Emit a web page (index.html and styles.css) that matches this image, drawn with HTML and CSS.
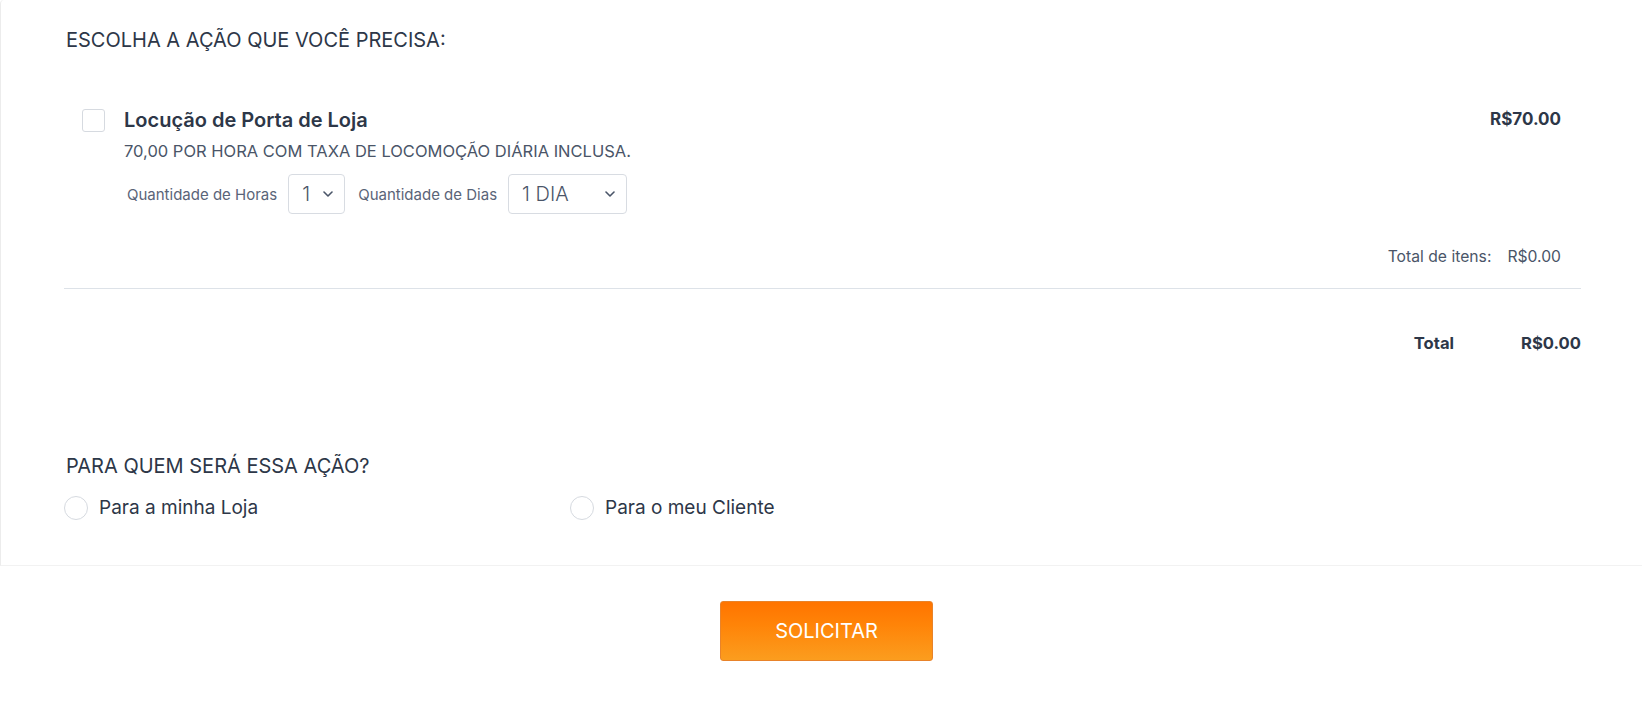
FILE: index.html
```html
<!DOCTYPE html>
<html lang="pt-BR">
<head>
<meta charset="utf-8">
<title>Escolha a ação</title>
<link rel="stylesheet" href="styles.css">
</head>
<body>
<div class="card">
  <div class="main">
    <h2 class="section-title">ESCOLHA A AÇÃO QUE VOCÊ PRECISA:</h2>

    <div class="item">
      <span class="checkbox"></span>
      <div class="item-body">
        <div class="item-title">Locução de Porta de Loja</div>
        <div class="item-desc">70,00 POR HORA COM TAXA DE LOCOMOÇÃO DIÁRIA INCLUSA.</div>
        <div class="options">
          <span class="opt-label">Quantidade de Horas</span>
          <span class="select select-sm"><span class="select-val">1</span><svg class="chev" viewBox="0 0 10 6" width="10" height="6"><path d="M1 1l4 4 4-4" fill="none" stroke="#4a5568" stroke-width="1.6" stroke-linecap="round" stroke-linejoin="round"/></svg></span>
          <span class="opt-label">Quantidade de Dias</span>
          <span class="select select-lg"><span class="select-val">1 DIA</span><svg class="chev" viewBox="0 0 10 6" width="10" height="6"><path d="M1 1l4 4 4-4" fill="none" stroke="#4a5568" stroke-width="1.6" stroke-linecap="round" stroke-linejoin="round"/></svg></span>
        </div>
      </div>
      <div class="item-price">R$70.00</div>
    </div>

    <div class="subtotal">
      <span class="subtotal-label">Total de itens:</span>
      <span class="subtotal-val">R$0.00</span>
    </div>

    <div class="rule"></div>

    <div class="total">
      <span class="total-label">Total</span>
      <span class="total-val">R$0.00</span>
    </div>

    <h2 class="section-title second">PARA QUEM SERÁ ESSA AÇÃO?</h2>
    <div class="radios">
      <label class="radio-opt"><span class="radio"></span><span class="radio-text">Para a minha Loja</span></label>
      <label class="radio-opt"><span class="radio"></span><span class="radio-text">Para o meu Cliente</span></label>
    </div>
  </div>
</div>
<div class="footer">
  <button class="btn" type="button">SOLICITAR</button>
</div>
</body>
</html>
```

FILE: styles.css
```css
html, body {
  margin: 0;
  padding: 0;
  background: #ffffff;
}
body {
  font-family: Inter, "Noto Sans", sans-serif;
  color: #2d3748;
}
.card {
  border-left: 1px solid #ececec;
  border-bottom: 1px solid #f2f2f2;
  border-top-left-radius: 4px;
  height: 566px;
  box-sizing: border-box;
}
.main {
  padding: 26px 61px 0 63px;
}
.section-title {
  margin: 0 0 0 2px;
  font-size: 20px;
  font-weight: 400;
  line-height: 28px;
  color: #2d3748;
  letter-spacing: 0;
}
.section-title.second {
  margin-top: 98px;
}
.item {
  display: flex;
  align-items: flex-start;
  padding: 0 20px 0 18px;
  margin-top: 54px;
}
.checkbox {
  width: 21px;
  height: 21px;
  border: 1px solid #d6dae0;
  border-radius: 3px;
  flex: none;
  margin-top: 1px;
  background: #fff;
}
.item-body {
  flex: 1;
  margin-left: 19px;
}
.item-title {
  font-size: 20px;
  font-weight: 600;
  line-height: 24px;
  color: #2d3748;
}
.item-desc {
  margin-top: 9px;
  font-size: 16.5px;
  line-height: 20px;
  color: #4a5568;
}
.options {
  display: flex;
  align-items: center;
  margin-top: 13px;
  margin-left: 3px;
}
.opt-label {
  font-size: 15px;
  color: #5a6478;
  margin-right: 11px;
}
.select {
  display: flex;
  align-items: center;
  justify-content: space-between;
  height: 40px;
  border: 1px solid #d8dce2;
  border-radius: 4px;
  box-sizing: border-box;
  padding: 0 11px 0 13px;
  margin-right: 11px;
  background: #fff;
}
.select-sm {
  width: 57px;
  margin-right: 13px;
}
.select-lg {
  width: 119px;
}
.select-val {
  font-size: 20px;
  font-weight: 300;
  color: #4a5568;
}
.chev {
  display: block;
}
.item-price {
  font-size: 17px;
  font-weight: 700;
  line-height: 22px;
  color: #2d3748;
}
.subtotal {
  display: flex;
  justify-content: flex-end;
  gap: 16px;
  padding-right: 20px;
  margin-top: 33px;
  font-size: 15.7px;
  line-height: 20px;
  color: #4a5568;
}
.rule {
  height: 1px;
  background: #dde2e8;
  margin-top: 21px;
}
.total {
  display: flex;
  justify-content: flex-end;
  margin-top: 43px;
  font-size: 16.6px;
  font-weight: 700;
  line-height: 22px;
  color: #2d3748;
}
.total-label {
  margin-right: 67px;
}
.radios {
  display: flex;
  margin-top: 15px;
}
.radio-opt {
  display: flex;
  align-items: center;
  width: 506px;
}
.radio {
  width: 22px;
  height: 22px;
  border: 1px solid #d6dae0;
  border-radius: 50%;
  flex: none;
  background: #fff;
}
.radio-text {
  margin-left: 11px;
  font-size: 19px;
  line-height: 26px;
  color: #2d3748;
}
.footer {
  display: flex;
  justify-content: center;
  padding: 35px 0 0 11px;
}
.btn {
  width: 213px;
  height: 60px;
  border: 1px solid #e8832a;
  border-radius: 3px;
  background: linear-gradient(to bottom, #ff7400 0%, #ff8408 40%, #fb9d1e 100%);
  color: #ffffff;
  font-family: Inter, "Noto Sans", sans-serif;
  font-size: 20px;
  font-weight: 400;
  letter-spacing: 0;
  cursor: pointer;
}
```
